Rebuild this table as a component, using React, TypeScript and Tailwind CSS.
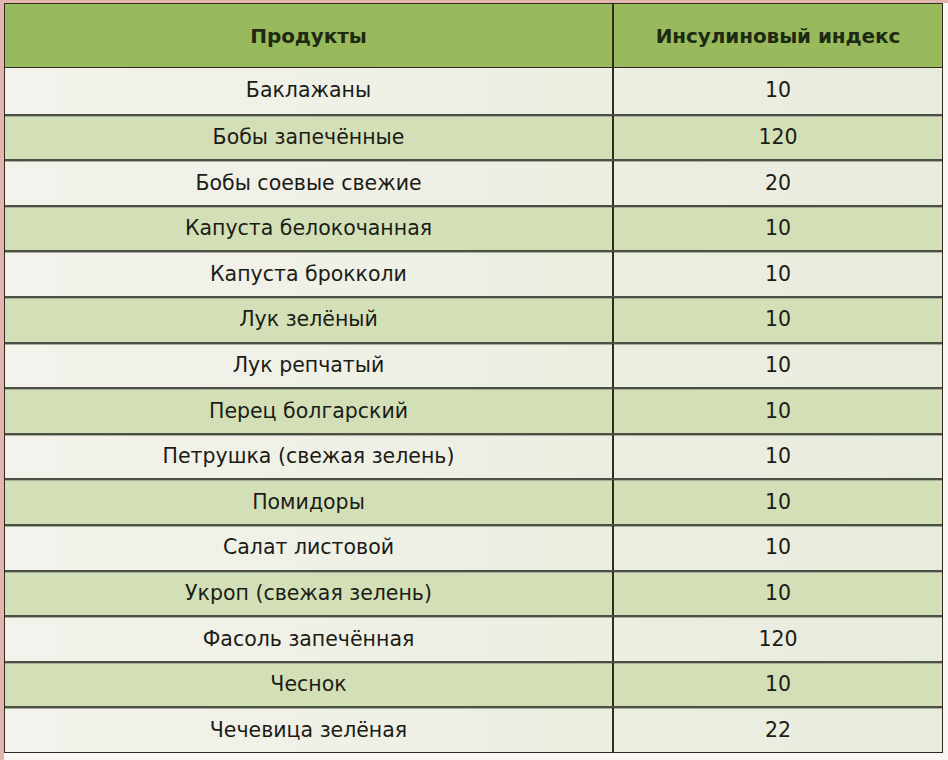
import React from "react";

const rows: [string, string][] = [
  ["Баклажаны", "10"],
  ["Бобы запечённые", "120"],
  ["Бобы соевые свежие", "20"],
  ["Капуста белокочанная", "10"],
  ["Капуста брокколи", "10"],
  ["Лук зелёный", "10"],
  ["Лук репчатый", "10"],
  ["Перец болгарский", "10"],
  ["Петрушка (свежая зелень)", "10"],
  ["Помидоры", "10"],
  ["Салат листовой", "10"],
  ["Укроп (свежая зелень)", "10"],
  ["Фасоль запечённая", "120"],
  ["Чеснок", "10"],
  ["Чечевица зелёная", "22"],
];

export default function App() {
  return (
    <div className="w-[948px] h-[760px] bg-[#fbf7f4] overflow-hidden">
      <div className="w-[948px] h-[760px] border-t-[3px] border-l-[4px] border-[#e2b5ae]">
        <div
          className="w-[939px] border-[1.5px] border-[#33291f] bg-[#ecefe3]"
          style={{ fontFamily: '"DejaVu Sans", Verdana, sans-serif' }}
        >
          <div className="flex h-[64px] bg-[#98ba5c] border-b-[1.5px] border-[#33291f] text-[20px] font-bold text-[#1e2a12] tracking-[-0.1px]">
            <div className="w-[607px] flex items-center justify-center">Продукты</div>
            <div className="w-[2px] bg-[#33291f]" />
            <div className="flex-1 flex items-center justify-center">Инсулиновый индекс</div>
          </div>
          {rows.map(([name, val], i) => (
            <div
              key={i}
              className={
                "flex h-[45.6px] text-[20.5px] text-[#1c1c16] " +
                (i > 0 ? "border-t-2 border-[#4a5044] shadow-[inset_0_1px_0_#a7ad9a] " : "") +
                (i % 2 === 1 ? "bg-[#d3e0b7]" : "bg-[linear-gradient(to_right,#f3f2ec,#e8ecdc)]")
              }
            >
              <div className="w-[607px] flex items-center justify-center">{name}</div>
              <div className="w-[2px] bg-[#33291f]" />
              <div className="flex-1 flex items-center justify-center">{val}</div>
            </div>
          ))}
        </div>
      </div>
    </div>
  );
}
